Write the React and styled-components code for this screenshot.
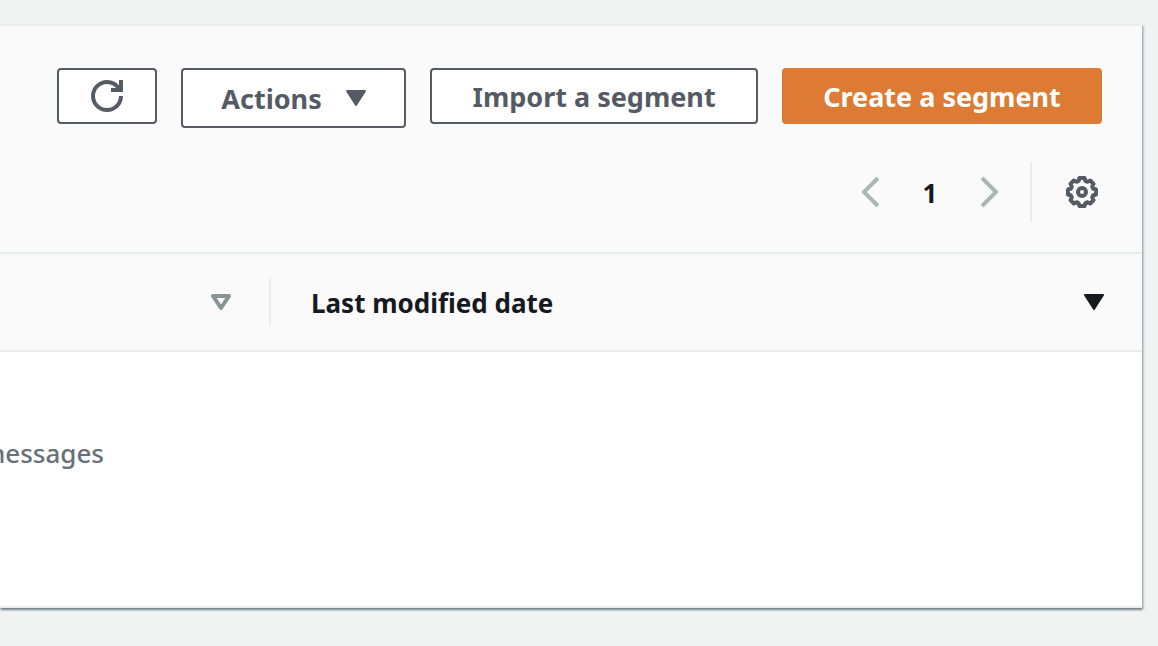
import React from "react";
import styled, { createGlobalStyle } from "styled-components";

const GlobalStyle = createGlobalStyle`
  * { box-sizing: border-box; }
  body {
    margin: 0;
    background: #f1f3f3;
    color: #16191f;
    font-family: "Noto Sans", "Open Sans", sans-serif;
    font-size: 26px;
    line-height: 36px;
  }
`;

const Page = styled.main`
  padding: 24px 16px 36px 0;
`;

const Card = styled.section`
  background: #ffffff;
  border-top: 2px solid #eaeded;
  border-bottom: 2px solid #eaeded;
  box-shadow: 0 2px 2px 0 rgba(0, 28, 36, 0.4), 2px 2px 2px 0 rgba(0, 28, 36, 0.2);
`;

const CardHeader = styled.header`
  background: #fafafa;
  padding: 42px 40px 30px;
`;

const Toolbar = styled.div`
  display: flex;
  justify-content: flex-end;
  align-items: flex-start;
  gap: 24px;
  height: 60px;
`;

const Button = styled.button`
  display: flex;
  align-items: center;
  justify-content: center;
  gap: 24px;
  min-width: ${(p) => p.$width};
  height: ${(p) => (p.$tall ? "60px" : "56px")};
  padding: 0 20px;
  border: 2px solid ${(p) => (p.$primary ? "#dd7a33" : "#545b64")};
  border-radius: 4px;
  background: ${(p) => (p.$primary ? "#dd7a33" : "#ffffff")};
  color: ${(p) => (p.$primary ? "#ffffff" : "#545b64")};
  font: inherit;
  font-size: 27px;
  font-weight: 700;
  white-space: nowrap;
  cursor: pointer;
`;

const Label = styled.span`
  padding-top: 2px;
`;

const Pagination = styled.nav`
  display: flex;
  justify-content: flex-end;
  align-items: center;
  height: 60px;
  margin-top: 34px;
`;

const IconButton = styled.button`
  display: flex;
  padding: 0 4px;
  border: 0;
  background: none;
  color: ${(p) => (p.$muted ? "#aab7b8" : "#545b64")};
`;

const PageNumber = styled.span`
  width: 92px;
  padding-top: 2px;
  font-weight: 700;
  text-align: center;
`;

const Settings = styled.div`
  display: flex;
  align-items: center;
  align-self: stretch;
  margin-left: 26px;
  padding-left: 30px;
  border-left: 2px solid #eaeded;
`;

const Table = styled.table`
  width: 100%;
  border-collapse: separate;
  border-spacing: 0;
  table-layout: fixed;
`;

const HeadCell = styled.th`
  width: ${(p) => p.$width || "auto"};
  height: 100px;
  padding: 0;
  background: #fafafa;
  border-top: 2px solid #eaeded;
  border-bottom: 2px solid #eaeded;
  text-align: left;
`;

const HeadContent = styled.div`
  display: flex;
  align-items: center;
  justify-content: ${(p) => (p.$end ? "flex-end" : "space-between")};
  height: 48px;
  padding: ${(p) => (p.$end ? "0 38px" : "0 38px 0 40px")};
  border-right: ${(p) => (p.$end ? "2px solid #eaeded" : "0")};
`;

const SortButton = styled.button`
  display: flex;
  padding: 0;
  border: 0;
  background: none;
  color: ${(p) => (p.$active ? "#16191f" : "#879596")};
`;

const EmptyCell = styled.td`
  height: 254px;
  padding: 83px 0 0;
  vertical-align: top;
  color: #687078;
  font-weight: 500;
`;

const EmptyText = styled.div`
  display: flex;
  justify-content: flex-end;
  width: 104px;
  overflow: hidden;
`;

const Triangle = ({ hollow }) => (
  <svg width="20" height="16" viewBox="0 0 20 16" aria-hidden="true">
    {hollow ? (
      <path d="M2 2H18L10 14Z" fill="none" stroke="currentColor" strokeWidth="4" strokeLinejoin="round" />
    ) : (
      <path d="M1 1H19L10 15Z" fill="currentColor" stroke="currentColor" strokeWidth="2" strokeLinejoin="round" />
    )}
  </svg>
);

const RefreshIcon = () => (
  <svg width="32" height="32" viewBox="0 0 32 32" fill="none" stroke="currentColor" strokeWidth="4" aria-hidden="true">
    <path d="M30 16A14 14 0 1 1 16 2C21.500 2 25.500 4.500 28.500 9" />
    <path d="M20 10H30V0" />
  </svg>
);

const Chevron = ({ right }) => (
  <svg width="20" height="32" viewBox="0 0 20 32" fill="none" stroke="currentColor" strokeWidth="4" aria-hidden="true">
    <path d={right ? "M2 2L16 16L2 30" : "M18 2L4 16L18 30"} />
  </svg>
);

const GearIcon = () => (
  <svg width="32" height="32" viewBox="0 0 32 32" fill="none" stroke="currentColor" strokeWidth="4" strokeLinejoin="round" aria-hidden="true">
    <path d="M13.500 2H18.500L19.500 5L21.500 5.800L24.200 4.500L27.500 7.800L26.200 10.500L27 12.500L30 13.500V18.500L27 19.500L26.200 21.500L27.500 24.200L24.200 27.500L21.500 26.200L19.500 27L18.500 30H13.500L12.500 27L10.500 26.200L7.800 27.500L4.500 24.200L5.800 21.500L5 19.500L2 18.500V13.500L5 12.500L5.800 10.500L4.500 7.800L7.800 4.500L10.500 5.800L12.500 5Z" />
    <circle cx="16" cy="16" r="4" />
  </svg>
);

export default function App() {
  return (
    <>
      <GlobalStyle />
      <Page>
        <Card>
          <CardHeader>
            <Toolbar>
              <Button $width="100px" aria-label="Refresh"><RefreshIcon /></Button>
              <Button $width="225px" $tall><Label>Actions</Label> <Triangle /></Button>
              <Button $width="328px"><Label>Import a segment</Label></Button>
              <Button $width="320px" $primary><Label>Create a segment</Label></Button>
            </Toolbar>
            <Pagination aria-label="Pagination">
              <IconButton $muted aria-label="Previous page"><Chevron /></IconButton>
              <PageNumber>1</PageNumber>
              <IconButton $muted aria-label="Next page"><Chevron right /></IconButton>
              <Settings>
                <IconButton aria-label="Settings"><GearIcon /></IconButton>
              </Settings>
            </Pagination>
          </CardHeader>
          <Table>
            <thead>
              <tr>
                <HeadCell $width="271px">
                  <HeadContent $end>
                    <SortButton aria-label="Sort column"><Triangle hollow /></SortButton>
                  </HeadContent>
                </HeadCell>
                <HeadCell>
                  <HeadContent>
                    <Label>Last modified date</Label>
                    <SortButton $active aria-label="Sort by last modified date"><Triangle /></SortButton>
                  </HeadContent>
                </HeadCell>
              </tr>
            </thead>
            <tbody>
              <tr>
                <EmptyCell colSpan={2}><EmptyText>messages</EmptyText></EmptyCell>
              </tr>
            </tbody>
          </Table>
        </Card>
      </Page>
    </>
  );
}
